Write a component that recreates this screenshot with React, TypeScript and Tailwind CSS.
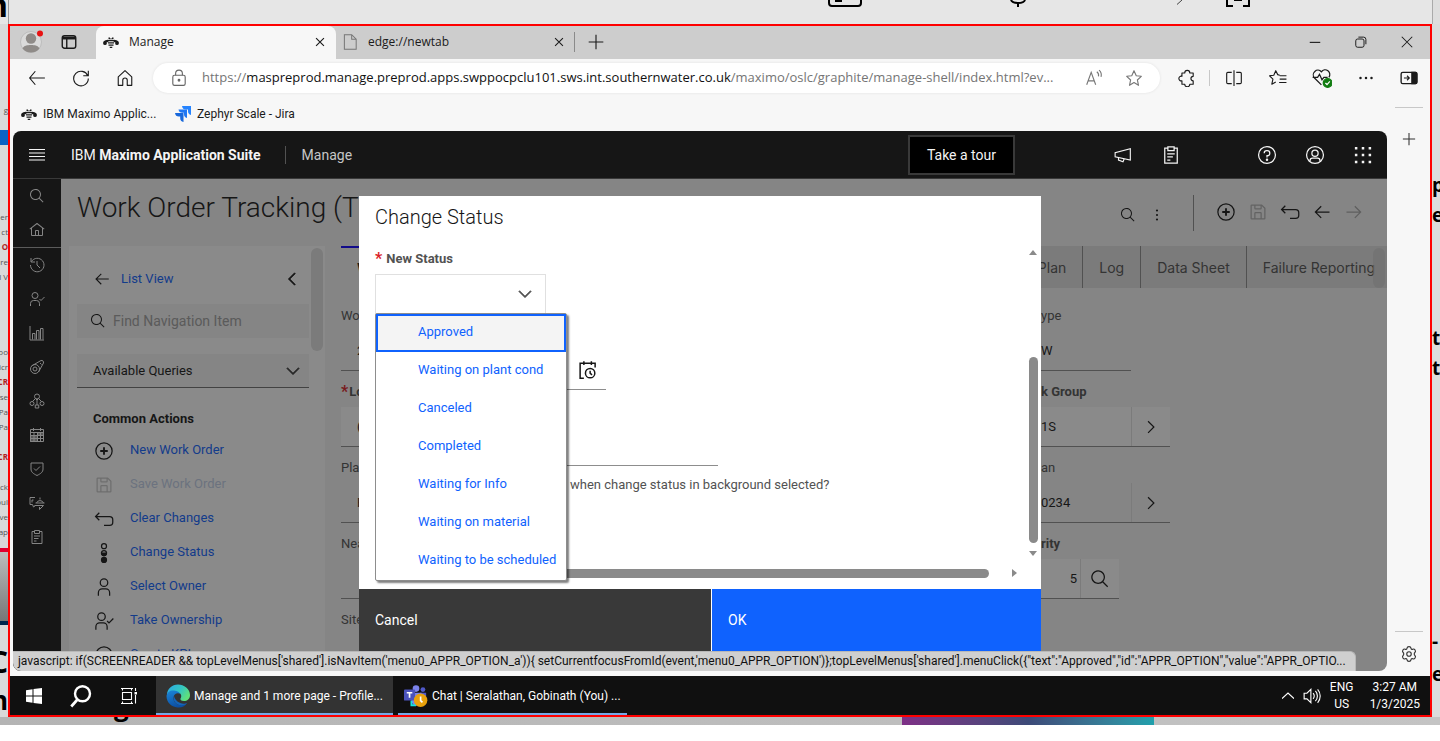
import React from "react";

type IconProps = { className?: string; children: React.ReactNode };

/* 32-unit outline icons: strokes by default, children may fill */
function Ico({ className = "size-4", children }: IconProps) {
  return (
    <svg viewBox="0 0 32 32" className={`shrink-0 ${className}`} fill="none" stroke="currentColor" strokeWidth={2} aria-hidden="true">
      {children}
    </svg>
  );
}

function Solid({ className = "size-4", d }: { className?: string; d: string }) {
  return (
    <svg viewBox="0 0 32 32" className={`shrink-0 ${className}`} fill="currentColor" aria-hidden="true">
      <path d={d} />
    </svg>
  );
}

const P = {
  search:
    "M29,27.6l-7.6-7.6a11,11,0,1,0-1.4,1.4L27.6,29ZM4,13a9,9,0,1,1,9,9A9,9,0,0,1,4,13Z",
  home: "M16.6,2.2a1,1,0,0,0-1.2,0L1,13.4l1.2,1.6L4,13.6V26a2,2,0,0,0,2,2H26a2,2,0,0,0,2-2V13.6L29.8,15,31,13.4ZM18,26H14V18h4Zm2,0V18a2,2,0,0,0-2-2H14a2,2,0,0,0-2,2v8H6V12.1l10-7.8,10,7.8V26Z",
  left: "M14 26 15.4 24.6 7.8 17 28 17 28 15 7.8 15 15.4 7.4 14 6 4 16z",
  right: "M18 6 16.6 7.4 24.2 15 4 15 4 17 24.2 17 16.6 24.6 18 26 28 16z",
  chevDown: "M16 22 6 12 7.4 10.6 16 19.2 24.6 10.6 26 12z",
  chevRight: "M22 16 12 26 10.6 24.6 19.2 16 10.6 7.4 12 6z",
  chevLeft: "M10 16 20 6 21.4 7.4 12.8 16 21.4 24.6 20 26z",
  save: "M27.7,9.3l-5-5A1,1,0,0,0,22,4H6A2,2,0,0,0,4,6V26a2,2,0,0,0,2,2H26a2,2,0,0,0,2-2V10A1,1,0,0,0,27.7,9.3ZM12,6h8v4H12Zm8,20H12V18h8Zm2,0V18a2,2,0,0,0-2-2H12a2,2,0,0,0-2,2v8H6V6h4v4a2,2,0,0,0,2,2h8a2,2,0,0,0,2-2V6.4l4,4V26Z",
};

const AddCircle = ({ className }: { className?: string }) => (
  <Ico className={className}>
    <circle cx="16" cy="16" r="13" />
    <path d="M16 10v12M10 16h12" strokeWidth={3} />
  </Ico>
);
const Undo = ({ className }: { className?: string }) => (
  <Ico className={className}>
    <path d="M8.5 6 2.5 12l6 6M3 12h22a5 5 0 0 1 5 5v4a5 5 0 0 1-5 5h-9" />
  </Ico>
);
const Clipboard = ({ className }: { className?: string }) => (
  <Ico className={className}>
    <path d="M10 5H6v24h20V5h-4M11 3h10v6H11zM10 14h12M10 19h9M10 24h5" />
  </Ico>
);
const User = ({ className }: { className?: string }) => (
  <Ico className={className}>
    <circle cx="16" cy="9" r="6" />
    <path d="M7 30v-5a6 6 0 0 1 6-6h6a6 6 0 0 1 6 6v5" />
  </Ico>
);
const UserCheck = ({ className }: { className?: string }) => (
  <Ico className={className}>
    <circle cx="12" cy="9" r="6" />
    <path d="M3 30v-5a6 6 0 0 1 6-6h6a6 6 0 0 1 6 6v5M21 16l3 3 7-7" />
  </Ico>
);
const StatusDots = ({ className }: { className?: string }) => (
  <Ico className={className}>
    <circle cx="16" cy="5" r="4" />
    <circle cx="16" cy="16" r="4" />
    <path d="M12 16a4 4 0 0 0 8 0z" fill="currentColor" />
    <circle cx="16" cy="27" r="4" fill="currentColor" />
  </Ico>
);
const Maximo = ({ className }: { className?: string }) => (
  <Ico className={className}>
    <g fill="currentColor" stroke="none">
      <ellipse cx="6" cy="15" rx="6" ry="2.6" transform="rotate(-25 6 15)" />
      <ellipse cx="4" cy="19" rx="3.6" ry="3" />
      <ellipse cx="26" cy="15" rx="6" ry="2.6" transform="rotate(25 26 15)" />
      <ellipse cx="28" cy="19" rx="3.6" ry="3" />
      <path d="M11 7h3v2h4V7h3v3.500H11zM10 12h12v2.500H10zM10 16.500h12V19H10zM11 21h10v2.500H11zM13.500 25.500h5v2.500h-5z" />
    </g>
  </Ico>
);

const Jira = () => (
  <svg viewBox="0 0 16 16" className="size-4 shrink-0" aria-hidden="true">
    <path d="M7 0h9v9a4 4 0 0 1-3-4V3.500h-2A4 4 0 0 1 7 0z" fill="#2684ff" />
    <path d="M3.500 3.500H12V12a4 4 0 0 1-3-4V6.800H7.500a4 4 0 0 1-4-3.300z" fill="#1f77f3" />
    <path d="M0 7h8.500v9a4 4 0 0 1-3.300-4v-1.500H4A4 4 0 0 1 0 7z" fill="#1868db" />
  </svg>
);

const EdgeLogo = () => (
  <svg viewBox="0 0 24 24" className="size-6 shrink-0" aria-hidden="true">
    <defs>
      <linearGradient id="edgeTop" x1="0" y1="0" x2="1" y2="0.5">
        <stop offset="0" stopColor="#2aa7e8" />
        <stop offset="0.6" stopColor="#34c6c0" />
        <stop offset="1" stopColor="#5fe07a" />
      </linearGradient>
      <linearGradient id="edgeLow" x1="0" y1="0" x2="0.4" y2="1">
        <stop offset="0" stopColor="#1b86d8" />
        <stop offset="1" stopColor="#0c4fa3" />
      </linearGradient>
    </defs>
    <path d="M1 11C1 5 6 0.500 12 0.500S24 5 24 11c0 4-3 6-6 6-3 0-4-1.500-3.500-2.500 1.500-2 1-6-3.500-6C6 8.500 1.500 10 1 11z" fill="url(#edgeTop)" />
    <path d="M0.500 12C1 8 4.500 6 8 6.500c3.500.3 5.500 2 6 3.500-2-1.500-6-.500-6.500 3.500-.500 4 3 7.500 7.500 7.500 2.500 0 4.500-1 6-2-2 3.500-6 5-9.500 4.500C5 23 .500 18 .500 12z" fill="url(#edgeLow)" />
    <path d="M8 12c-1.500 4 1 9 7.500 9.200 2.500 0 4.500-.900 5.700-2-.700.300-2 .600-3.500.500C13 19.500 9 16.500 8 12z" fill="#1464b8" />
  </svg>
);

const TeamsLogo = () => (
  <svg viewBox="0 0 26 24" className="h-6 w-6 shrink-0" aria-hidden="true">
    <circle cx="13" cy="4" r="3.600" fill="#7b83eb" />
    <circle cx="20.500" cy="5" r="2.600" fill="#5059c9" />
    <path d="M17 8.500h7V15a4 4 0 0 1-7 0z" fill="#5059c9" />
    <path d="M8 8.500h11V17a5.500 5.500 0 0 1-11 0z" fill="#7b83eb" />
    <path d="M8 17v5h5" fill="none" stroke="#16e0e0" strokeWidth="2" />
    <rect x="0" y="5" width="12" height="12" rx="1" fill="#4b53bc" />
    <path d="M3 8.500h6M6 8.500V14" stroke="#fff" strokeWidth="1.800" />
    <circle cx="18" cy="16.500" r="7.300" fill="#e8a10c" />
    <path d="M18 12.500V17l2 2" stroke="#fff" strokeWidth="1.800" fill="none" />
  </svg>
);

function TabStrip() {
  return (
    <div className="flex h-[33px] shrink-0 items-stretch bg-[#cdcdcd] pb-px text-[12px] text-[#1b1b1b]">
      <div className="flex w-[86px] items-center gap-4 rounded-br-lg pl-[10px]">
        <button aria-label="Profile" className="size-6">
          <svg viewBox="0 0 24 24" className="size-6" aria-hidden="true">
            <circle cx="11" cy="12" r="10.500" fill="#dadada" stroke="#bdbdbd" />
            <circle cx="11" cy="8.500" r="5.200" fill="#8f8b88" />
            <path d="M2.500 18.500C4 15.500 7 15 11 15s7 .500 8.500 3.500A10.500 10.500 0 0 1 11 22.500a10.500 10.500 0 0 1-8.500-4z" fill="#8f8b88" />
            <circle cx="20" cy="3.500" r="3" fill="#e81111" />
          </svg>
        </button>
        <button aria-label="Tab actions">
          <Ico className="size-[18px]">
            <rect x="4" y="5" width="24" height="22" rx="4" strokeWidth={2.500} />
            <path d="M4 9h24" strokeWidth={5} />
            <path d="M12 10v17" strokeWidth={2.500} />
          </Ico>
        </button>
      </div>
      <div className="-mb-px flex w-[240px] items-center rounded-t-lg bg-[#f7f7f7] pr-[9px] pb-px pl-[7px]">
        <Maximo className="size-4" />
        <span className="ml-[10px] flex-1">Manage</span>
        <button aria-label="Close tab">
          <Ico className="size-[14px]"><path d="M7 7l18 18M25 7L7 25" strokeWidth={2.600} /></Ico>
        </button>
      </div>
      <div className="flex w-[238px] items-center pr-[8px] pl-[5px]">
        <Ico className="size-[18px] text-[#767676]"><path d="M6 3h13l8 8v18H6zM19 3v8h8" strokeWidth={1.800} /></Ico>
        <span className="ml-[9px] flex-1">edge://newtab</span>
        <button aria-label="Close tab">
          <Ico className="size-[14px]"><path d="M7 7l18 18M25 7L7 25" strokeWidth={2.400} /></Ico>
        </button>
      </div>
      <div className="my-[6px] w-px bg-[#8a8a8a]" />
      <button aria-label="New tab" className="ml-[12px]">
        <Ico className="size-[18px]"><path d="M16 3v26M3 16h26" /></Ico>
      </button>
      <div className="ml-auto flex">
        <button aria-label="Minimize" className="flex w-[46px] items-center justify-center">
          <Ico className="size-3"><path d="M2 17h28" strokeWidth={3} /></Ico>
        </button>
        <button aria-label="Restore" className="flex w-[46px] items-center justify-center">
          <Ico className="size-3"><rect x="2" y="8" width="22" height="22" rx="5" strokeWidth={2.600} /><path d="M9 3h14a6 6 0 0 1 6 6v13" strokeWidth={2.600} /></Ico>
        </button>
        <button aria-label="Close" className="flex w-[46px] items-center justify-center">
          <Ico className="size-3"><path d="M2 2l28 28M30 2L2 30" strokeWidth={2.800} /></Ico>
        </button>
      </div>
    </div>
  );
}

const toolBtn = "flex h-9 w-11 shrink-0 items-center justify-center";

function Toolbar() {
  return (
    <div className="flex h-[37px] shrink-0 items-center pl-[5px] text-[#1b1b1b]">
      <button aria-label="Back" className={toolBtn}><Ico className="size-[18px]"><path d="M13 4 3 16l10 12M3 16h27" /></Ico></button>
      <button aria-label="Refresh" className={toolBtn}><Ico className="size-[18px]"><path d="M28 12A13 13 0 1 0 29 17M29 3v9h-9" /></Ico></button>
      <button aria-label="Home" className={toolBtn}><Ico className="size-[18px]"><path d="M4 14 16 3l12 11v15h-8v-9a4 4 0 0 0-8 0v9H4z" strokeLinejoin="round" /></Ico></button>
      <div className="ml-[6px] flex h-[30px] min-w-0 flex-1 items-center rounded-full bg-white px-[17px] shadow-[0_0_3px_#00000018]">
        <Ico className="size-[18px] text-[#666]"><rect x="5" y="11" width="22" height="18" rx="3" /><path d="M10 11V8a6 6 0 0 1 12 0v3" /><circle cx="16" cy="20" r="1.500" fill="currentColor" /></Ico>
        <div className="ml-[14px] flex-1 truncate pt-px text-[13px] text-[#757575]">
          https://<span className="text-[#111]">maspreprod.manage.preprod.apps.swppocpclu101.sws.int.southernwater.co.uk</span>/maximo/oslc/graphite/manage-shell/index.html?ev...
        </div>
        <button aria-label="Read aloud" className="text-[#777]"><Ico className="size-[18px]"><path d="M3 28 11 6l8 22M6 21h10M21 5a8 8 0 0 1 3 8M25 2a12 12 0 0 1 3.500 12" /></Ico></button>
        <button aria-label="Add to favorites" className="ml-[22px] text-[#777]"><Ico className="size-[18px]"><path d="m16 3 4 9 9 1-7 6.500 2 9.500-8-5-8 5 2-9.500L3 13l9-1z" strokeLinejoin="round" /></Ico></button>
      </div>
      <button aria-label="Extensions" className={`ml-[5px] ${toolBtn}`}><Ico className="size-[18px]"><path d="M7 7h5a4.500 4.500 0 0 1 9 0h6v6a4 4 0 0 0 0 8v6h-6a4.500 4.500 0 0 1-9 0H7v-6a4.200 4.200 0 1 1 0-8z" strokeLinejoin="round" /></Ico></button>
      <div className="mr-[2px] h-4 w-px bg-[#c8c8c8]" />
      <button aria-label="Split screen" className={toolBtn}><Ico className="size-[18px]"><path d="M12 6H5a2 2 0 0 0-2 2v16a2 2 0 0 0 2 2h7M20 6h7a2 2 0 0 1 2 2v16a2 2 0 0 1-2 2h-7M16 2v28" /></Ico></button>
      <button aria-label="Favorites" className={toolBtn}><Ico className="size-[18px]"><path d="M19 11 15.500 10 12 3 8.500 11 1 12l6 6-2 9 7-4M19 12h12M19 18h12M18 24h13" strokeLinejoin="round" /></Ico></button>
      <button aria-label="Browser essentials" className={toolBtn}>
        <Ico className="size-[20px]"><path d="M15 27 4 16A7 7 0 0 1 15 6a7 7 0 0 1 12 9M1 15h8l3-5 4 9 3-4h6" /><circle cx="25" cy="24" r="7" fill="#107c10" stroke="#107c10" /><path d="m21.500 24 2.500 2.500 4.500-5" stroke="#fff" /></Ico>
      </button>
      <button aria-label="Settings and more" className={toolBtn}><Ico className="size-4"><g fill="currentColor" stroke="none"><circle cx="5" cy="16" r="2.500" /><circle cx="16" cy="16" r="2.500" /><circle cx="27" cy="16" r="2.500" /></g></Ico></button>
      <button aria-label="Sidebar" className="flex h-9 w-[42px] shrink-0 items-center justify-center"><Ico className="size-[18px]"><rect x="2" y="6" width="28" height="20" rx="3" strokeWidth={2.400} /><path d="M21 6h7a2 2 0 0 1 2 2v16a2 2 0 0 1-2 2h-7z" fill="currentColor" /><path d="M7 16h9M12.500 12l4 4-4 4" /></Ico></button>
    </div>
  );
}

function SuiteHeader() {
  const cell = "flex size-12 items-center justify-center";
  return (
    <header className="flex h-12 shrink-0 items-center border-b border-[#393939] bg-[#161616] font-['Roboto',sans-serif] text-[14px] text-[#f4f4f4]">
      <button aria-label="Menu" className={cell}>
        <Ico className="size-4"><path d="M0 5h32M0 12h32M0 19h32M0 26h32" /></Ico>
      </button>
      <div className="ml-[10px] pt-[2px]">IBM <b className="font-bold">Maximo Application Suite</b></div>
      <div className="mr-4 ml-6 h-[18px] w-px bg-[#525252]" />
      <div className="pt-[2px] text-[#c6c6c6]">Manage</div>
      <button className="mr-[84px] ml-auto h-10 border-2 border-[#393939] bg-black px-[17px] pt-px">Take a tour</button>
      <button aria-label="Announcements" className={cell}><Ico className="size-[18px]"><path d="M29 5v20L2 19v-7zM8 20v5l8 3 2-5" /></Ico></button>
      <button aria-label="Tasks" className={`mr-12 ${cell}`}><Clipboard className="size-5" /></button>
      <button aria-label="Help" className={cell}><Ico className="size-5"><circle cx="16" cy="16" r="13.500" /><path d="M11.500 13a4 4 0 0 1 4-4h1a4 4 0 0 1 0 8H16v3" /><circle cx="16" cy="23.500" r="1" fill="currentColor" /></Ico></button>
      <button aria-label="Account" className={cell}><Ico className="size-5"><circle cx="16" cy="16" r="13.500" /><circle cx="16" cy="13" r="5" /><path d="M8 26v-1a4 4 0 0 1 4-4h8a4 4 0 0 1 4 4v1" /></Ico></button>
      <button aria-label="Applications" className={cell}><Ico className="size-5"><path d="M3 5h4M14 5h4M25 5h4M3 16h4M14 16h4M25 16h4M3 27h4M14 27h4M25 27h4" strokeWidth={4} /></Ico></button>
    </header>
  );
}

function Rail() {
  const cell = "flex h-[34px] w-12 shrink-0 items-center justify-center";
  return (
    <nav aria-label="Suite" className="flex w-12 shrink-0 flex-col bg-[#161616] text-[#f4f4f4]">
      <button aria-label="Search" className={cell}><Solid d={P.search} /></button>
      <button aria-label="Home" className={cell}><Solid d={P.home} /></button>
      <div className="h-px shrink-0 bg-[#a0a0a0]" />
      <button aria-label="Recent" className={cell}><Ico><path d="M5 9A13.500 13.500 0 1 1 3 16M4 2v8h8M16 8v8l6 6" /></Ico></button>
      <button aria-label="Assignments" className={cell}><UserCheck /></button>
      <button aria-label="Analytics" className={cell}><Ico><path d="M2 2v28h28M7 29V17h5v12M15 29V11h5v18M23 29V7h5v22" /></Ico></button>
      <button aria-label="Assets" className={cell}><Ico><circle cx="12" cy="20" r="9" /><circle cx="12" cy="20" r="4" /><path d="M5 14 24 3a4 4 0 0 1 5 5L19 26M22 8l3 3" /></Ico></button>
      <button aria-label="Hierarchy" className={cell}><Ico><circle cx="16" cy="7" r="5" /><circle cx="6" cy="21" r="4" /><circle cx="26" cy="21" r="4" /><path d="M12.500 24h7v6h-7zM16 12v12M13 11l-6 6M19 11l6 6M13 11l3 3 3-3" /></Ico></button>
      <button aria-label="Calendar" className={cell}><Ico><path d="M3 5h26v24H3zM9 2v6M23 2v6M3 11h26M3 17h26M3 23h26M10 11v18M17 11v18M23 11v18" /><path d="M3 17h14v12H3zM17 11h12v6H17z" fill="currentColor" fillOpacity={0.600} /></Ico></button>
      <button aria-label="Safety" className={cell}><Ico><path d="M4 4h24v12c0 6-4 9-12 13C8 25 4 22 4 16zM10 15l4 4 8-8" /></Ico></button>
      <button aria-label="Service" className={cell}><Ico><path d="M12 5H2v14h5l2 5 4-3M13 16h18M15 16a7.500 7.500 0 0 1 14 0M22 5v4M11 21h18l-8 8v-5M9 10H6v5" /></Ico></button>
      <button aria-label="Work orders" className={cell}><Clipboard /></button>
    </nav>
  );
}

const actions: { label: string; icon: React.ReactNode; disabled?: boolean }[] = [
  { label: "New Work Order", icon: <AddCircle className="size-5" /> },
  { label: "Save Work Order", icon: <Solid className="size-5" d={P.save} />, disabled: true },
  { label: "Clear Changes", icon: <Undo className="size-5" /> },
  { label: "Change Status", icon: <StatusDots className="size-5" /> },
  { label: "Select Owner", icon: <User className="size-5" /> },
  { label: "Take Ownership", icon: <UserCheck className="size-5" /> },
  { label: "Create KPI", icon: <AddCircle className="size-5" /> },
];

function SideNav() {
  return (
    <aside className="relative ml-2 w-64 shrink-0 overflow-hidden bg-white pr-4 pl-2">
      <div className="flex h-[58px] items-center pt-2 pr-[7px] pl-4">
        <Solid className="size-[18px]" d={P.left} />
        <a href="#list" className="ml-[10px] flex-1 text-[#0f62fe]">List View</a>
        <button aria-label="Collapse"><Solid className="size-5 stroke-current stroke-1" d={P.chevLeft} /></button>
      </div>
      <label className="flex h-[34px] items-center bg-[#f4f4f4] pl-[13px]">
        <Solid className="size-4" d={P.search} />
        <input aria-label="Find Navigation Item" placeholder="Find Navigation Item" className="ml-[7px] w-full bg-transparent text-[14px] outline-none placeholder:text-[#a0a0a0]" />
      </label>
      <button className="mt-4 flex h-[34px] w-full items-center justify-between border-b border-[#6f6f6f] bg-[#f4f4f4] pt-px pr-[6px] pl-4">
        Available Queries
        <Solid className="size-5 stroke-current stroke-1 text-[#393939]" d={P.chevDown} />
      </button>
      <h2 className="flex h-[45px] items-end pb-[5px] pl-4 font-bold">Common Actions</h2>
      <ul>
        {actions.map((a) => (
          <li key={a.label} className="flex h-[34px] items-center gap-4 pl-[17px]">
            <span className={a.disabled ? "pt-[2px] text-[#c6c6c6]" : "pt-[2px] text-[#161616]"}>{a.icon}</span>
            <a href="#action" className={a.disabled ? "pb-px text-[#c2cfe8]" : "pb-px text-[#0f62fe]"}>{a.label}</a>
          </li>
        ))}
      </ul>
      <div className="absolute top-[2px] right-[2px] h-[103px] w-3 rounded-full bg-[#e0e0e0]" />
    </aside>
  );
}

type Field = { label: string; value: string; bold?: boolean; required?: boolean; box?: boolean };

const leftFields: Field[] = [
  { label: "Wo", value: "2" },
  { label: "Lo", value: "(", bold: true, required: true, box: true },
  { label: "Pla", value: "F" },
  { label: "Nea", value: "" },
  { label: "Site", value: "" },
];

function WorkOrderForm() {
  const label = "flex h-6 items-center pt-px text-[#525252]";
  const field = "mt-1 mb-2 flex h-10 items-center border-b border-[#8d8d8d]";
  const side = "flex h-full w-[39px] items-center justify-center border-l border-[#e0e0e0]";
  return (
    <div className="flex justify-between pt-[15px] pl-4">
      <div className="w-[120px]">
        {leftFields.map((f) => (
          <div key={f.label}>
            <div className={`${label} ${f.bold ? "font-bold" : ""}`}>
              {f.required && <span className="mr-px text-[16px] font-bold text-[#da1e28]">*</span>}
              {f.label}
            </div>
            <div className={`${field} pl-4 ${f.box ? "bg-white" : ""}`}>{f.value}</div>
          </div>
        ))}
      </div>
      <div className="mr-[217px] w-[129px]">
        <div className={label}>ype</div>
        <div className={`${field} mr-[39px]`}>W</div>
        <div className={`${label} font-bold`}>k Group</div>
        <div className={`${field} bg-white`}><span className="flex-1">1S</span><button aria-label="Work Group detail" className={side}><Solid className="size-5" d={P.chevRight} /></button></div>
        <div className={label}>an</div>
        <div className={field}><span className="flex-1">0234</span><button aria-label="Plan detail" className={side}><Solid className="size-5" d={P.chevRight} /></button></div>
        <div className={`${label} font-bold`}>rity</div>
        <div className={`${field} mr-[51px] bg-white`}><span className="flex-1 pr-[3px] text-right">5</span><button aria-label="Find priority" className={side}><Solid className="size-5" d={P.search} /></button></div>
        <div className={label} />
        <div className={field}>e</div>
      </div>
    </div>
  );
}

function WorkOrderPage() {
  return (
    <div className="flex min-w-0 flex-1 flex-col bg-[#f4f4f4] text-[13px] text-[#161616]">
      <div className="flex h-[67px] shrink-0 items-start pr-[23px] pl-4">
        <h1 className="pt-[9px] text-[28px] leading-10 font-light">Work Order Tracking (T</h1>
        <div className="ml-auto flex items-center pt-4">
          <button aria-label="Search" className="mt-1 mr-[13px]"><Solid className="size-4" d={P.search} /></button>
          <button aria-label="More" className="mt-1"><Ico className="size-4"><g fill="currentColor" stroke="none"><circle cx="16" cy="7" r="2.200" /><circle cx="16" cy="16" r="2.200" /><circle cx="16" cy="25" r="2.200" /></g></Ico></button>
          <div className="mr-[22px] ml-[28px] h-9 w-px bg-[#8d8d8d]" />
          <div className="flex gap-3 pb-[2px]">
            <AddCircle className="size-5" />
            <Solid className="size-5 text-[#b0b0b0]" d={P.save} />
            <Undo className="size-5" />
            <Solid className="size-5" d={P.left} />
            <Solid className="size-5 text-[#a8a8a8]" d={P.right} />
          </div>
        </div>
      </div>
      <div className="flex min-h-0 flex-1">
        <SideNav />
        <main className="relative min-w-0 flex-1 overflow-hidden">
          <div className="ml-4 flex h-[42px] font-['Inter',sans-serif] text-[14px] text-[#525252]">
            <button className="w-[120px] border-t-2 border-[#0f00fe] pl-4 text-left font-semibold text-[#161616]">W</button>
            <div className="flex flex-1 justify-end bg-[#e0e0e0]">
              <button className="border-r border-[#8d8d8d] px-4">Plan</button>
              <button className="border-r border-[#8d8d8d] px-4">Log</button>
              <button className="border-r border-[#8d8d8d] px-4">Data Sheet</button>
              <button className="pr-3 pl-4">Failure Reporting</button>
            </div>
          </div>
          <WorkOrderForm />
          <div className="absolute top-[2px] right-[2px] h-10 w-3 rounded-full bg-[#c9c9c9]/60" />
        </main>
      </div>
    </div>
  );
}

const statuses = ["Approved", "Waiting on plant cond", "Canceled", "Completed", "Waiting for Info", "Waiting on material", "Waiting to be scheduled"];

function ChangeStatusDialog() {
  return (
    <div role="dialog" aria-labelledby="dlg-title" className="flex w-[682px] max-w-full flex-col bg-white text-[13px] text-[#161616]">
      <h2 id="dlg-title" className="h-[49px] shrink-0 pt-[7px] pl-4 text-[20px] leading-7 font-light">Change Status</h2>
      <div className="flex h-[328px] shrink-0">
        <div className="min-w-0 flex-1 pl-4">
          <label htmlFor="new-status" className="flex h-[29px] items-center pb-[2px] font-bold text-[#525252]">
            <span className="mr-1 text-[16px] font-bold text-[#da1e28]">*</span>New Status
          </label>
          <div className="relative w-[171px]">
            <input id="new-status" className="h-10 w-full border border-[#e0e0e0] bg-white px-3 outline-none" />
            <Solid className="pointer-events-none absolute top-[10px] right-[11px] size-5 stroke-[#525252] stroke-1 text-[#525252]" d={P.chevDown} />
            <ul className="absolute top-[39px] left-0 z-10 w-[192px] rounded-[2px] border border-[#8d8d8d] bg-white shadow-[2px_2px_2px_#00000080]">
              {statuses.map((s, i) => (
                <li key={s} className={i === 0 ? "border-2 border-[#0f62fe] bg-[#f4f4f4]" : "border-2 border-transparent"}>
                  <a href="#status" className="flex h-[34px] items-center pb-[2px] pl-10 whitespace-nowrap text-[#0f62fe]">{s}</a>
                </li>
              ))}
            </ul>
          </div>
          <div className="mt-9 flex h-10 w-[231px] items-center justify-end border-b border-[#8d8d8d] pr-[9px]">
            <button aria-label="Pick date">
              <Ico className="size-5"><path d="M11 29H5V5h24v7M11 2v6M23 2v6" strokeWidth={2.400} /><circle cx="21" cy="21" r="7.500" strokeWidth={2.400} /><path d="M21 17v4l3 3" strokeWidth={2.400} /></Ico>
            </button>
          </div>
          <div className="mt-9 h-10 w-[343px] border-b border-[#8d8d8d]" />
          <p className="pt-[9px] pl-[195px] text-[#525252]">when change status in background selected?</p>
        </div>
        <div className="mr-[2px] flex w-3 shrink-0 flex-col items-center text-[#8a8a8a]">
          <svg viewBox="0 0 8 5" className="mt-[5px] h-[5px] w-2" fill="currentColor"><path d="M4 0l4 5H0z" /></svg>
          <div className="mt-[102px] h-[186px] w-[9px] rounded-full bg-[#8a8a8a]" />
          <svg viewBox="0 0 8 5" className="mt-2 h-[5px] w-2" fill="currentColor"><path d="M0 0h8L4 5z" /></svg>
        </div>
      </div>
      <div className="flex h-4 shrink-0 items-start pl-4 text-[#8a8a8a]">
        <div className="-mt-1 h-[9px] w-[614px] rounded-full bg-[#8a8a8a]" />
        <svg viewBox="0 0 5 8" className="-mt-1 ml-[23px] h-2 w-[5px]" fill="currentColor"><path d="M0 0l5 4-5 4z" /></svg>
      </div>
      <div className="flex h-16 shrink-0 gap-px text-[14px] text-white">
        <button className="w-[352px] bg-[#393939] pb-px pl-4 text-left">Cancel</button>
        <button className="flex-1 bg-[#0f62fe] pb-px pl-4 text-left">OK</button>
      </div>
    </div>
  );
}

function EdgeSidebar() {
  return (
    <div className="flex w-[43px] shrink-0 flex-col items-center pt-[11px] text-[#333]">
      <div className="h-px w-7 bg-[#c8c8c8]" />
      <button aria-label="Customize" className="mt-[24px]"><Ico className="size-[14px]"><path d="M16 2v28M2 16h28" strokeWidth={2.400} /></Ico></button>
      <div className="mt-auto h-px w-7 bg-[#c8c8c8]" />
      <button aria-label="Settings" className="mt-[13px] mb-[13px]">
        <Ico className="size-[18px]">
          <circle cx="16" cy="16" r="4" />
          <path d="M12.500 5.500C13 2 19 2 19.500 5.500c.300 2 1.500 2.600 3.300 1.900C26 6 29 11.200 26.500 13.300c-1.600 1.400-1.600 4 0 5.400C29 20.800 26 26 22.800 24.600c-1.800-.700-3-.100-3.300 1.900-.500 3.500-6.500 3.500-7 0-.300-2-1.500-2.600-3.300-1.900C6 26 3 20.800 5.500 18.700c1.600-1.400 1.600-4 0-5.400C3 11.200 6 6 9.200 7.400c1.800.700 3 .100 3.300-1.900z" />
        </Ico>
      </button>
    </div>
  );
}

function Taskbar() {
  const cell = "flex w-12 items-center justify-center";
  return (
    <footer className="flex h-[39px] shrink-0 items-stretch bg-[#101010] font-['Roboto',sans-serif] text-[12px] whitespace-nowrap text-white">
      <button aria-label="Start" className="flex w-[47px] items-center justify-center">
        <svg viewBox="0 0 16 16" className="size-4" fill="currentColor"><path d="M0 2.200 6.500 1.300v6.200H0zM7.500 1.100 16 0v7.500H7.500zM0 8.500h6.500v6.200L0 13.800zM7.500 8.500H16V16l-8.500-1.100z" /></svg>
      </button>
      <button aria-label="Search" className={cell}><Ico className="size-6"><circle cx="18" cy="13" r="10" strokeWidth={3.200} /><path d="M11 21 3 30" strokeWidth={3.600} /></Ico></button>
      <button aria-label="Task view" className={cell}><Ico className="size-4"><path d="M0 1h24M0 31h24M3 9h18v14H3zM3 1v4M21 1v4M3 27v4M21 27v4M29 0v6M29 14v17" strokeWidth={2.200} /><path d="M27 8h5v5h-5z" fill="currentColor" stroke="none" /></Ico></button>
      <button className="ml-[3px] flex w-[237px] items-center gap-1 border-b-2 border-[#76a9e8] bg-[#333] pt-[2px] pl-[10px]">
        <EdgeLogo />Manage and 1 more page - Profile...
      </button>
      <button className="ml-[5px] flex w-[229px] items-center gap-1 border-b-2 border-[#76a9e8] pt-[2px] pl-[6px]">
        <TeamsLogo />Chat | Seralathan, Gobinath (You) ...
      </button>
      <div className="ml-auto flex items-center pr-[10px] text-center leading-[17px]">
        <Ico className="size-3"><path d="M0 23 16 8l16 15" strokeWidth={3} /></Ico>
        <Ico className="mx-[9px] size-[18px]"><path d="M2 11h5l7-7v24l-7-7H2zM18 11a8 8 0 0 1 0 10M22 7a13 13 0 0 1 0 18M26 4a18 18 0 0 1 0 24" /></Ico>
        <div className="w-6">ENG<br />US</div>
        <div className="ml-4">3:27 AM<br />1/3/2025</div>
      </div>
    </footer>
  );
}

const leftScraps: [string, string][] = [
  ["mt-16", "ner"], ["", "ct"], ["text-[#b01e1e] font-bold", "O"], ["", "ure"], ["", "l V"],
  ["mt-[60px]", "poo"], ["", "icr"], ["text-[#b01e1e] font-bold", "CR"], ["", "sse"], ["", "Pa"], ["", "Pa"],
  ["mt-[15px] text-[#b01e1e] font-bold", "CR"], ["mt-[15px]", "ick"], ["", "oul"], ["", "ove"], ["", "rap"],
];

export default function App() {
  return (
    <div className="flex h-screen flex-col overflow-hidden bg-white pb-4 font-['Open_Sans',sans-serif]">
      <div className="flex h-6 shrink-0 items-start bg-[#e6e6e6]">
        <div className="flex h-6 w-[9px] items-start justify-end overflow-hidden border-r border-[#999] text-[32px] leading-[10px] font-bold text-black">n</div>
        <div className="flex flex-1 items-start justify-end pr-[182px] text-black">
          <svg viewBox="0 0 34 7" className="h-[7px] w-[34px]" fill="none" stroke="currentColor" strokeWidth="2"><path d="M1 0v3a3 3 0 0 0 3 3h26a3 3 0 0 0 3-3V0M7 1h7" /></svg>
          <svg viewBox="0 0 16 7" className="ml-[148px] h-[7px] w-4" fill="none" stroke="currentColor" strokeWidth="2"><path d="M1 0q1 3 7 3t7-3M8 3v4" /></svg>
          <svg viewBox="0 0 8 5" className="ml-[150px] h-[5px] w-2" fill="none" stroke="#444"><path d="M1 4.500 6 0" /></svg>
          <svg viewBox="0 0 24 7" className="ml-[42px] h-[7px] w-6" fill="none" stroke="currentColor" strokeWidth="2"><path d="M1 0v6h6M17 6h6V0M8 0h8" /></svg>
        </div>
        <div className="h-6 w-2 border-l border-[#aaa] bg-[#dedede]" />
      </div>

      <div className="flex min-h-0 flex-1">
        <div className="flex w-2 shrink-0 flex-col items-end overflow-hidden bg-[#d9d9d9] text-[8px] leading-[15px] whitespace-nowrap text-[#555]">
          <span className="mt-[78px]">g</span>
          <div className="mt-[13px] h-[15px] w-full shrink-0 bg-[#0b63c5]" />
          {leftScraps.map(([cls, t], i) => (
            <span key={i} className={cls}>{t}</span>
          ))}
          <div className="mt-[9px] h-1 w-full shrink-0 bg-[#e00030]" />
          <div className="h-[69px] w-full shrink-0 bg-gradient-to-b from-[#bdbdbd] to-[#777]" />
          <div className="h-1 w-full shrink-0 bg-[#00264d]" />
          <span className="mt-[17px] text-[30px] leading-10 font-bold text-black">C</span>
          <span className="text-[26px] leading-9 font-bold text-black">n</span>
        </div>

        <div className="flex min-w-0 flex-1 flex-col border-2 border-[#ff0000] bg-[#f7f7f7]">
          <TabStrip />
          <Toolbar />
          <div className="flex min-h-0 flex-1">
            <div className="flex min-w-0 flex-1 flex-col pb-[5px] pl-[3px]">
              <div className="flex h-[35px] shrink-0 items-center pl-2 font-['Roboto',sans-serif] text-[12px] whitespace-nowrap text-[#1b1b1b]">
                <Maximo className="size-4" />
                <a href="#maximo" className="ml-[6px] w-[112px]">IBM Maximo Applic...</a>
                <span className="w-5" />
                <Jira />
                <a href="#jira" className="ml-[6px]">Zephyr Scale - Jira</a>
              </div>
              <div className="relative flex min-h-0 flex-1 flex-col overflow-hidden rounded-lg">
                <SuiteHeader />
                <div className="relative flex min-h-0 flex-1 overflow-hidden font-['Roboto',sans-serif]">
                  <Rail />
                  <WorkOrderPage />
                  <div className="absolute inset-0 flex items-start justify-center bg-[#161616]/50 pt-[17px]">
                    <ChangeStatusDialog />
                  </div>
                </div>
                <div className="absolute bottom-0 left-0 max-w-full overflow-hidden rounded-tr-md border-t border-r border-[#b8b8b8] bg-[#cfcfcf] pr-[9px] pl-[5px] font-['Roboto',sans-serif] text-[12px] leading-[19px] whitespace-nowrap text-[#111]">
                  {`javascript: if(SCREENREADER && topLevelMenus['shared'].isNavItem('menu0_APPR_OPTION_a')){ setCurrentfocusFromId(event,'menu0_APPR_OPTION')};topLevelMenus['shared'].menuClick({"text":"Approved","id":"APPR_OPTION","value":"APPR_OPTIO...`}
                </div>
              </div>
            </div>
            <EdgeSidebar />
          </div>
          <Taskbar />
        </div>

        <div className="flex w-2 shrink-0 flex-col overflow-hidden bg-[#dcdcdc] text-[19px] leading-[30px] font-bold text-black">
          <span className="mt-[146px]">p</span>
          <span>e</span>
          <span className="mt-[93px]">t</span>
          <span>t</span>
          <span className="mt-[243px]">-</span>
          <span className="mt-[3px]">e</span>
        </div>
      </div>

      <div className="flex h-2 shrink-0 justify-between overflow-hidden bg-gradient-to-r from-[#b4b4b4] to-[#c4c4c4]">
        <span className="-mt-[11px] ml-[114px] text-[26px] leading-[0px] font-bold text-black">g</span>
        <div className="mr-[286px] w-[252px] bg-gradient-to-r from-[#7d2f86] via-[#3c4a78] to-[#1fa0ac]" />
      </div>
    </div>
  );
}
